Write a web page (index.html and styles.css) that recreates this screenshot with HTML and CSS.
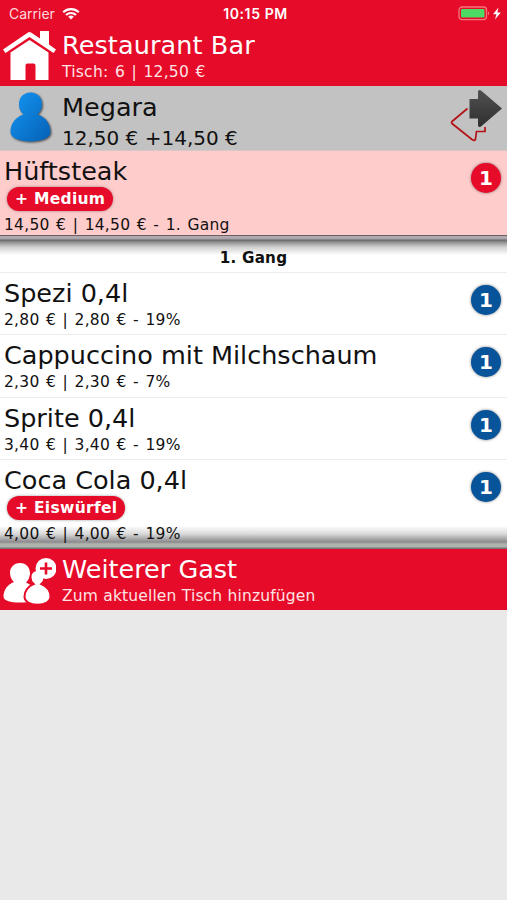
FILE: index.html
```html
<!DOCTYPE html>
<html lang="de">
<head>
    <meta charset="UTF-8">
    <meta name="viewport" content="width=device-width, initial-scale=1.0">
    <title>Restaurant Bar</title>
    <link rel="stylesheet" href="styles.css">
</head>
<body>
    <div class="statusbar">
        <div class="carrier">
            <span>Carrier</span>
            <svg width="18" height="13" viewBox="0 0 18 13" fill="none" stroke="#fff" stroke-width="2.2">
                <path d="M1.2 5.2a11.2 11.2 0 0 1 15.6 0"/>
                <path d="M4 8a7.2 7.2 0 0 1 10 0"/>
                <path d="M9 12.6L6.2 9.8a4 4 0 0 1 5.6 0z" fill="#fff" stroke="none"/>
            </svg>
        </div>
        <div class="clock">10:15 PM</div>
        <div class="power">
            <svg width="44" height="15" viewBox="0 0 44 15">
                <rect x="1" y="1" width="27.5" height="12.6" rx="3" fill="none" stroke="#f4757c" stroke-width="1.3"/>
                <rect x="3" y="3" width="23.5" height="8.6" rx="1" fill="#4cd964"/>
                <path d="M30 5.3q2.4 2 0 4z" fill="#f4757c"/>
                <path d="M40.500 1.600L35 8.200h3.400l-1.400 5.200L42.800 6.600h-3.400z" fill="#fff"/>
            </svg>
        </div>
    </div>

    <header class="bar header">
        <svg class="icon" width="56" height="52" viewBox="0 0 56 52" fill="#fff">
            <path d="M3 20.500L28 3.500q1.500-1 3 0l9 6V2h9v13.500l7 5-2.500 3.500L29.500 8 5.500 24z"/>
            <path d="M10.500 23.500L29.500 11 48.500 23.500V51H35.500V36.500q0-2-2-2h-6q-2 0-2 2V51h-15z"/>
        </svg>
        <div class="bar-text">
            <h1>Restaurant Bar</h1>
            <p>Tisch: 6 | 12,50 €</p>
        </div>
    </header>

    <section class="guest">
        <svg class="icon" width="56" height="60" viewBox="0 0 56 60">
            <defs>
                <linearGradient id="blue" x1="0" y1="0" x2="1" y2="1">
                    <stop offset="0" stop-color="#1496f4"/>
                    <stop offset="1" stop-color="#0560b4"/>
                </linearGradient>
            </defs>
            <path class="person" fill="url(#blue)" d="M30.500 6.500c7 0 11.500 5 11.500 11.500 0 5-2 8-4.500 10.500C45 31 50.500 37 50.500 46c0 6-9 9.500-20 9.500S10.500 52 10.500 46c0-9 5.500-15 13-17.500-2.500-2.500-4.500-5.500-4.500-10.500C19 11.500 23.500 6.500 30.500 6.500z"/>
        </svg>
        <div class="guest-text">
            <h2>Megara</h2>
            <p>12,50 € +14,50 €</p>
        </div>
        <svg class="swap" width="54" height="56" viewBox="0 0 54 56">
            <defs>
                <linearGradient id="dark" x1="0" y1="0" x2="0" y2="1">
                    <stop offset="0" stop-color="#505050"/>
                    <stop offset="1" stop-color="#303030"/>
                </linearGradient>
            </defs>
            <path d="M17.500 22.500L2 35.500q-1 1 0 2L22 53.500q3 2 3.500-.5l1-7.500H35v-4.500" fill="none" stroke="#b31217" stroke-width="1.700"/>
            <path d="M19.500 13h8.500V6q0-3 3-1.500L52 22.500 31 40.500q-3 1.500-3-1.500v-6.500h-8.500z" fill="url(#dark)"/>
        </svg>
    </section>

    <main>
        <article class="item ordered">
            <div class="item-text">
                <h2>Hüftsteak</h2>
                <span class="extra">+ Medium</span>
                <p>14,50 € | 14,50 € - 1. Gang</p>
            </div>
            <span class="count">1</span>
        </article>

        <div class="course">
            <h3>1. Gang</h3>
        </div>

        <article class="item">
            <div class="item-text">
                <h2>Spezi 0,4l</h2>
                <p>2,80 € | 2,80 € - 19%</p>
            </div>
            <span class="count">1</span>
        </article>
        <article class="item">
            <div class="item-text">
                <h2>Cappuccino mit Milchschaum</h2>
                <p>2,30 € | 2,30 € - 7%</p>
            </div>
            <span class="count">1</span>
        </article>
        <article class="item">
            <div class="item-text">
                <h2>Sprite 0,4l</h2>
                <p>3,40 € | 3,40 € - 19%</p>
            </div>
            <span class="count">1</span>
        </article>
        <article class="item last">
            <div class="item-text">
                <h2>Coca Cola 0,4l</h2>
                <span class="extra">+ Eiswürfel</span>
                <p>4,00 € | 4,00 € - 19%</p>
            </div>
            <span class="count">1</span>
        </article>
    </main>

    <footer class="bar add-guest">
        <svg class="icon" width="56" height="54" viewBox="0 0 56 54" fill="#fff">
            <path d="M20 10c6.200 0 10 4.500 10 10.500 0 4-1.800 7-4 9 7 3 11 8 11 14 0 4-7 6-17 6S3.500 47.500 3.500 43.500c0-7 4.500-12 10.500-14.500-2.200-2-4-5-4-9C10 14.500 13.800 10 20 10z"/>
            <path stroke="#e60b28" stroke-width="2" d="M37.500 17c4.500 0 7 3.500 7 7.500 0 3-1.300 5-3.200 6.500 4.700 2 9.200 6.500 9.200 12.500 0 5-5.500 8.300-13 8.300S24.500 48.500 24.500 43.500c0-5.500 4-10.500 9.200-12.500-1.900-1.500-3.200-3.500-3.200-6.500 0-4 2.500-7.500 7-7.500z"/>
            <circle cx="46" cy="15.500" r="10.500"/>
            <path d="M46 9.500v12M40 15.500h12" stroke="#e60b28" stroke-width="2.600"/>
        </svg>
        <div class="bar-text">
            <h2>Weiterer Gast</h2>
            <p>Zum aktuellen Tisch hinzufügen</p>
        </div>
    </footer>
</body>
</html>
```
FILE: styles.css
```css
* {
  margin: 0;
  padding: 0;
  box-sizing: border-box;
}

body {
  font-family: Verdana, "DejaVu Sans", sans-serif;
  background-color: #e9e9e9;
  color: #111;
}

h1, h2 {
  font-size: 25.5px;
  font-weight: normal;
  line-height: 32px;
  white-space: nowrap;
}

p {
  font-size: 15.5px;
  letter-spacing: 0.25px;
  word-spacing: 1.3px;
  line-height: 20px;
  white-space: nowrap;
}

svg {
  display: block;
  flex: none;
}

.statusbar {
  display: grid;
  grid-template-columns: 1fr auto 1fr;
  align-items: center;
  height: 27px;
  padding: 0 5px 0 9px;
  background-color: #e60b28;
  color: #fff;
  font-family: Inter, sans-serif;
  font-size: 14px;
}

.carrier {
  display: flex;
  align-items: center;
  gap: 7px;
  color: #ffd9dc;
}

.clock {
  font-weight: 600;
  letter-spacing: 0.6px;
}

.power {
  justify-self: end;
}

.bar {
  display: flex;
  background-color: #e60b28;
  color: #fff;
}

.bar p {
  color: #ffe3e5;
}

.header {
  height: 59px;
  padding-top: 2px;
}

.header p {
  line-height: 22px;
}

.header h1 {
  letter-spacing: 0.1px;
}

.bar-text,
.guest-text {
  padding-left: 6px;
}

.guest {
  display: flex;
  height: 65px;
  background-color: #c2c2c2;
  border-bottom: 1px solid #d6c8c8;
}

.guest-text {
  flex: 1;
  padding-top: 5px;
}

.guest p {
  font-size: 20px;
  line-height: 30px;
  letter-spacing: 0;
  word-spacing: 0;
}

.person {
  filter: drop-shadow(1px 1px 1px rgba(0, 0, 0, 0.6));
}

.swap {
  margin-right: 3px;
}

.item {
  display: flex;
  justify-content: space-between;
  height: 62.3px;
  padding: 4px 6px 0 4px;
  background-color: #fff;
  border-bottom: 1px solid #ececec;
}

.item p {
  padding-top: 1px;
}

.ordered {
  height: 84px;
  background-color: #ffcccc;
  border-bottom: none;
}

.extra {
  display: block;
  width: fit-content;
  height: 24px;
  margin: 0 0 3px 3px;
  padding: 0 8px;
  border-radius: 12px;
  background-color: #e60b28;
  box-shadow: 0 0 3px rgba(0, 0, 0, 0.4);
  color: #fff;
  font-size: 15.5px;
  font-weight: bold;
  letter-spacing: 0.3px;
  line-height: 24px;
}

.count {
  width: 30px;
  height: 30px;
  margin-top: 8px;
  border-radius: 50%;
  background-color: #07549b;
  box-shadow: 0 0 3px rgba(0, 0, 0, 0.5);
  color: #fff;
  font-size: 20px;
  font-weight: bold;
  line-height: 30px;
  text-align: center;
}

.ordered .count {
  background-color: #e60b28;
}

.course {
  height: 38px;
  padding-top: 13px;
  background: linear-gradient(#6a6064 0, #6a6064 1px, #b4acb2 1px, #a8a2a8 4px, #666 5px, #8e8e8e 7px, #d0d0d0 12px, #fff 20px);
  border-bottom: 1px solid #ececec;
}

h3 {
  font-size: 15.2px;
  letter-spacing: 0.2px;
  line-height: 20px;
  text-align: center;
}

.last {
  height: 89px;
  border-bottom: none;
  background: linear-gradient(#fff 66px, #d8d8d8 74px, #8c8a8c 82px, #b0b4ae 84px, #b0b4ae 87px, #777 88px);
}

.add-guest {
  height: 61px;
  padding-top: 4px;
}

.add-guest p {
  letter-spacing: 0.15px;
  word-spacing: 0.2px;
  line-height: 23px;
}
```
